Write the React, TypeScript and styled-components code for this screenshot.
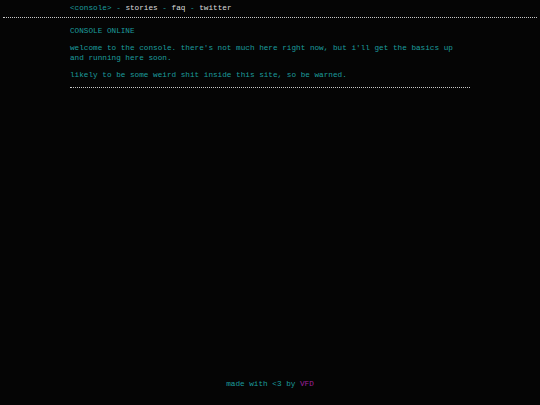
import styled, { createGlobalStyle } from "styled-components"

const GlobalStyle = createGlobalStyle`
  html, body {
    margin: 0;
    padding: 0;
    background: #050505;
  }
  body {
    font-family: "Liberation Mono", "DejaVu Sans Mono", monospace;
    font-size: 7.7px;
    color: #1c9d9d;
  }
`

const Page = styled.div`
  display: flex;
  flex-direction: column;
  min-height: 100vh;
`

const Header = styled.header`
  margin: 0 3px;
  padding: 3px 0 4px;
  border-bottom: 1px dotted #c8c8c8;
`

const Inner = styled.div`
  width: 400px;
  margin: 0 auto;
`

const Nav = styled.nav`
  line-height: 10px;
  color: #1c9d9d;
  white-space: pre;
`

const NavLink = styled.span<{ $active?: boolean }>`
  color: ${(p) => (p.$active ? "#1c9d9d" : "#dcdcdc")};
`

const Main = styled(Inner)`
  padding-top: 8px;
`

const Title = styled.h1`
  margin: 0 0 7px;
  font-size: 7.7px;
  font-weight: normal;
  line-height: 10px;
  text-transform: uppercase;
`

const Para = styled.p`
  margin: 0 0 7px;
  line-height: 10px;
`

const Rule = styled.hr`
  margin: 0;
  border: 0;
  border-top: 1px dotted #c8c8c8;
  margin-top: 7px;
`

const Footer = styled.footer`
  margin-top: auto;
  padding-bottom: 16px;
  text-align: center;
  line-height: 10px;
`

const Magenta = styled.span`
  color: #a0209c;
`

export default function App() {
  return (
    <>
      <GlobalStyle />
      <Page>
        <Header>
          <Inner>
            <Nav>
              <NavLink $active>&lt;console&gt;</NavLink>
              {" - "}
              <NavLink>stories</NavLink>
              {" - "}
              <NavLink>faq</NavLink>
              {" - "}
              <NavLink>twitter</NavLink>
            </Nav>
          </Inner>
        </Header>
        <Main>
          <Title>console online</Title>
          <Para>
            welcome to the console. there's not much here right now, but i'll get the basics up
            and running here soon.
          </Para>
          <Para>likely to be some weird shit inside this site, so be warned.</Para>
          <Rule />
        </Main>
        <Footer>
          made with &lt;3 by <Magenta>VFD</Magenta>
        </Footer>
      </Page>
    </>
  )
}
